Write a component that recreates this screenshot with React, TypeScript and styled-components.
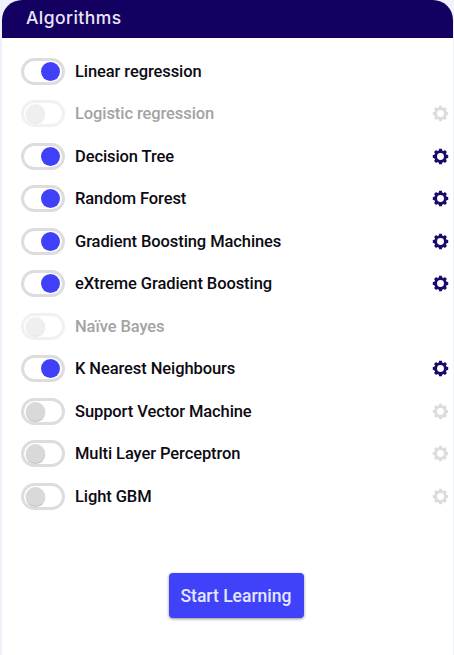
import React from 'react';
import styled, { createGlobalStyle } from 'styled-components';

const GlobalStyle = createGlobalStyle`
  * { box-sizing: border-box; }
  body { margin: 0; background: #eff1fb; font-family: Roboto, "Liberation Sans", sans-serif; }
`;

const Page = styled.main`
  height: 655px;
  padding: 0 1px 0 2px;
  overflow: hidden;
`;

const Card = styled.section`
  height: 100%;
  background: #fff;
  border-radius: 20px 20px 0 0;
  overflow: hidden;
  display: flex;
  flex-direction: column;
`;

const Header = styled.h1`
  margin: 0;
  height: 37.5px;
  flex: none;
  padding: 0 0 2px 24px;
  display: flex;
  align-items: center;
  background: #130061;
  color: #e9e6f5;
  font: 500 17.5px Inter, sans-serif;
  letter-spacing: 0.45px;
`;

const List = styled.ul`
  margin: 0;
  padding: 12.25px 4px 0 19px;
  list-style: none;
`;

const Row = styled.li`
  height: 42.5px;
  display: flex;
  align-items: center;
`;

const Switch = styled.button<{ $on: boolean; $disabled: boolean }>`
  width: 44px;
  height: 27px;
  flex: none;
  padding: 0 2px;
  display: flex;
  align-items: center;
  justify-content: ${(p) => (p.$on ? 'flex-end' : 'flex-start')};
  border: 3px solid #dddddf;
  border-radius: 14px;
  background: #fff;
  opacity: ${(p) => (p.$disabled ? 0.4 : 1)};
`;

const Knob = styled.span<{ $on: boolean }>`
  width: 19px;
  height: 19px;
  flex: none;
  border-radius: 50%;
  background: ${(p) => (p.$on ? '#4040f8' : '#d9d9d9')};
  box-shadow: ${(p) => (p.$on ? 'none' : '0 1px 1px #b9b9b9')};
`;

const Label = styled.span<{ $disabled: boolean }>`
  margin-left: 10px;
  padding-top: 1px;
  flex: 1;
  font-size: 16.5px;
  font-weight: 500;
  line-height: 20px;
  letter-spacing: -0.09px;
  color: ${(p) => (p.$disabled ? '#a3a3a3' : '#0c0a12')};
`;

const Gear = styled.svg<{ $active: boolean }>`
  width: 17px;
  height: 17px;
  flex: none;
  color: ${(p) => (p.$active ? '#180b6a' : '#dcdcdc')};
`;

const Footer = styled.footer`
  margin-top: 56px;
  padding-left: 17px;
  display: flex;
  justify-content: center;
`;

const StartButton = styled.button`
  width: 135px;
  height: 45px;
  padding: 0;
  border: 0;
  border-radius: 4px;
  background: #4042fa;
  color: #e4e8ff;
  font: 500 17.5px Roboto, sans-serif;
  box-shadow: 0 1px 3px rgba(0, 0, 0, 0.45);
`;

type Setting = 'none' | 'off' | 'on';
interface Algorithm {
  name: string;
  on?: boolean;
  disabled?: boolean;
  setting: Setting;
}

const algorithms: Algorithm[] = [
  { name: 'Linear regression', on: true, setting: 'none' },
  { name: 'Logistic regression', disabled: true, setting: 'off' },
  { name: 'Decision Tree', on: true, setting: 'on' },
  { name: 'Random Forest', on: true, setting: 'on' },
  { name: 'Gradient Boosting Machines', on: true, setting: 'on' },
  { name: 'eXtreme Gradient Boosting', on: true, setting: 'on' },
  { name: 'Naïve Bayes', disabled: true, setting: 'none' },
  { name: 'K Nearest Neighbours', on: true, setting: 'on' },
  { name: 'Support Vector Machine', setting: 'off' },
  { name: 'Multi Layer Perceptron', setting: 'off' },
  { name: 'Light GBM', setting: 'off' },
];

const teeth = [0, 45, 90, 135, 180, 225, 270, 315];

const GearIcon = ({ active }: { active: boolean }) => (
  <Gear $active={active} viewBox="0 0 17 17" aria-hidden="true">
    <circle cx="8.5" cy="8.5" r="4.9" fill="none" stroke="currentColor" strokeWidth="2.9" />
    {teeth.map((angle) => (
      <path
        key={angle}
        d="M6.8 3.3 L7.1 .8 H9.9 L10.2 3.3 Z"
        fill="currentColor"
        transform={`rotate(${angle} 8.5 8.5)`}
      />
    ))}
  </Gear>
);

export default function App() {
  return (
    <Page>
      <GlobalStyle />
      <Card>
        <Header>Algorithms</Header>
        <List>
          {algorithms.map(({ name, on = false, disabled = false, setting }) => (
            <Row key={name}>
              <Switch $on={on} $disabled={disabled} role="switch" aria-checked={on} aria-label={name}>
                <Knob $on={on} />
              </Switch>
              <Label $disabled={disabled}>{name}</Label>
              {setting !== 'none' && <GearIcon active={setting === 'on'} />}
            </Row>
          ))}
        </List>
        <Footer>
          <StartButton>Start Learning</StartButton>
        </Footer>
      </Card>
    </Page>
  );
}
